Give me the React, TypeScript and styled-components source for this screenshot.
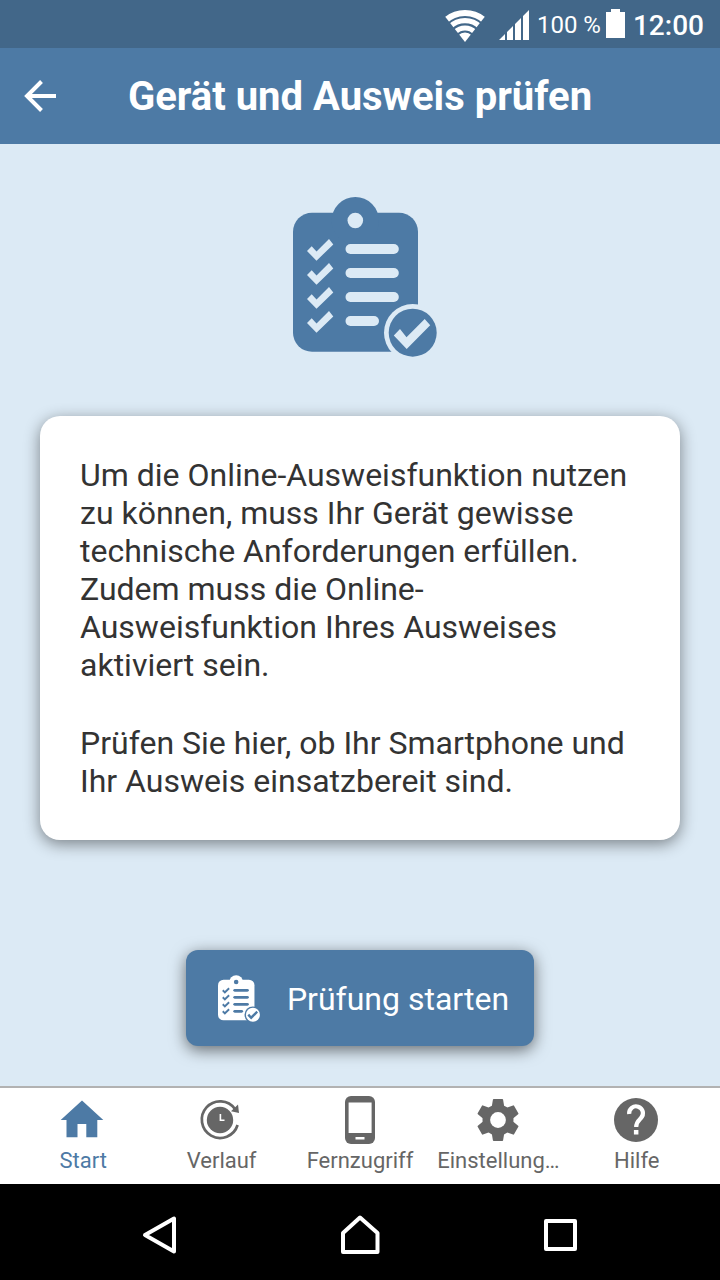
import React from "react";
import styled, { createGlobalStyle } from "styled-components";

const colors = {
  blue: "#4d7aa5",
  statusBlue: "#426789",
  pale: "#dceaf5",
  grey: "#666666",
  text: "#333333",
  white: "#ffffff",
};

const GlobalStyle = createGlobalStyle`
  * { box-sizing: border-box; }
  body {
    margin: 0;
    font-family: Roboto, "Liberation Sans", sans-serif;
    color: ${colors.text};
  }
`;

const Screen = styled.div`
  display: flex;
  flex-direction: column;
  min-height: 100vh;
  background: ${colors.pale};
`;

const StatusBar = styled.div`
  display: flex;
  align-items: center;
  justify-content: flex-end;
  height: 48px;
  padding: 2px 16px 0;
  background: ${colors.statusBlue};
  color: ${colors.white};
  svg { display: block; }
`;

const WifiSlot = styled.span`
  margin-right: 14px;
`;

const Battery = styled.span`
  display: flex;
  align-items: center;
  gap: 5px;
  margin: 0 8px;
  font-size: 24px;
  line-height: 28px;
`;

const Clock = styled.time`
  padding-top: 2px;
  font-size: 28px;
  font-weight: 500;
  line-height: 32px;
`;

const TitleBar = styled.header`
  display: grid;
  grid-template-columns: 80px 1fr 80px;
  align-items: center;
  height: 96px;
  background: ${colors.blue};
  color: ${colors.white};
`;

const IconButton = styled.button`
  display: flex;
  align-items: center;
  justify-content: center;
  height: 96px;
  padding: 0;
  border: 0;
  background: none;
  color: inherit;
  cursor: pointer;
`;

const Title = styled.h1`
  margin: 0;
  padding-top: 2px;
  font-size: 40px;
  font-weight: 700;
  line-height: 48px;
  text-align: center;
`;

const Main = styled.main`
  flex: 1;
  display: flex;
  flex-direction: column;
  align-items: center;
  padding: 53px 40px 40px;
`;

const Hero = styled.div`
  padding-left: 10px;
  margin-bottom: 59px;
  svg { display: block; }
`;

const Card = styled.section`
  width: 100%;
  display: flex;
  flex-direction: column;
  gap: 40px;
  margin-bottom: 40px;
  padding: 40px;
  border-radius: 20px;
  background: ${colors.white};
  box-shadow: 0 4px 16px rgba(0, 0, 0, 0.45);
`;

const Paragraph = styled.p`
  margin: 0;
  font-size: 32px;
  line-height: 38px;
`;

const StartButton = styled.button`
  display: flex;
  align-items: center;
  gap: 27px;
  height: 96px;
  margin-top: auto;
  padding: 0 25px 0 32px;
  border: 0;
  border-radius: 12px;
  background: ${colors.blue};
  box-shadow: 0 4px 16px rgba(0, 0, 0, 0.55);
  color: ${colors.white};
  font: 400 32px/38px Roboto, "Liberation Sans", sans-serif;
  cursor: pointer;
`;

const StartLabel = styled.span`
  padding-top: 2px;
`;

const TabBar = styled.nav`
  display: grid;
  grid-template-columns: repeat(5, minmax(0, 1fr));
  height: 98px;
  padding: 0 14px;
  border-top: 2px solid #b2b2b2;
  background: ${colors.white};
`;

const Tab = styled.a<{ $active?: boolean }>`
  display: flex;
  flex-direction: column;
  align-items: center;
  padding-top: 8px;
  color: ${(p) => (p.$active ? colors.blue : colors.grey)};
  font-size: 22px;
  line-height: 26px;
  white-space: nowrap;
  text-decoration: none;
  svg { display: block; margin-bottom: 4px; }
`;

const SystemBar = styled.nav`
  display: grid;
  grid-template-columns: repeat(3, 1fr);
  height: 96px;
  padding: 0 60px;
  background: #000000;
  color: ${colors.white};
`;

const SystemButton = styled(IconButton)`
  padding-top: 6px;
`;

const TICK = "M14 54 L23.5 63.7 L40.3 47.5 L36 42 L23.5 54.5 L18.7 49.3 Z";

function ChecklistIcon({ width, height, ink, paper }: { width: number; height: number; ink: string; paper: string }) {
  return (
    <svg width={width} height={height} viewBox="0 0 144 160" aria-hidden="true">
      <g fill={ink}>
        <rect x="0" y="15.7" width="125" height="139" rx="19" />
        <circle cx="62.3" cy="23.7" r="23.7" />
      </g>
      <g fill={paper}>
        <circle cx="62.3" cy="23.5" r="7.8" />
        {[0, 24, 48, 72].map((y) => (
          <g key={y} transform={`translate(0 ${y})`}>
            <path d={TICK} />
            <rect x="52.5" y="47" width={y === 72 ? 33.5 : 53.3} height="10" rx="5" />
          </g>
        ))}
        <circle cx="119.7" cy="135.7" r="28.7" />
      </g>
      <circle cx="119.7" cy="135.7" r="24" fill={ink} />
      <path fill={paper} d="M100.8 138.5 L113.7 152 L137.2 128.3 L131.7 122 L113.5 140.2 L107 132 Z" />
    </svg>
  );
}

const WifiIcon = () => (
  <svg width="40" height="34" viewBox="0 0 40 34" aria-hidden="true">
    <clipPath id="wifi-fan">
      <path d="M20 34 L-5 2 H45 Z" />
    </clipPath>
    <g clipPath="url(#wifi-fan)" fill="none" stroke="#fff">
      <circle cx="20" cy="34" r="29" strokeWidth="6" />
      <circle cx="20" cy="34" r="21.4" strokeWidth="5.4" />
      <circle cx="20" cy="34" r="14" strokeWidth="5" />
      <circle cx="20" cy="34" r="4.7" strokeWidth="9.4" />
    </g>
  </svg>
);

const SignalIcon = () => (
  <svg width="30" height="30" viewBox="0 0 30 30" fill="#fff" aria-hidden="true">
    <path d="M0 30 L6 24 V30 Z M8 22 L14 16 V30 H8 Z M16 14 L22 8 V30 H16 Z M24 6 L30 0 V30 H24 Z" />
  </svg>
);

const BatteryIcon = () => (
  <svg width="19" height="32" viewBox="0 0 19 32" fill="#fff" aria-hidden="true">
    <path d="M5 0 H14 V3 H19 V29 H0 V3 H5 Z" />
  </svg>
);

const BackIcon = () => (
  <svg width="32" height="32" viewBox="0 0 32 32" fill="none" stroke="currentColor" strokeWidth="4" aria-hidden="true">
    <path d="M32 16 H3 M17.5 1.5 L3 16 L17.5 30.5" />
  </svg>
);

const HomeIcon = () => (
  <svg width="48" height="48" viewBox="1 0 48 48" fill="currentColor" aria-hidden="true">
    <path d="M24 4.5 L45.3 24 H39.3 V41.3 H28.3 V28 H19.5 V41.3 H8.5 V24 H2.7 Z" />
  </svg>
);

const HistoryIcon = () => (
  <svg width="48" height="48" viewBox="2 0 48 48" aria-hidden="true">
    <path d="M39 13 A18.3 18.3 0 1 0 41.6 29" fill="none" stroke="currentColor" strokeWidth="2.7" />
    <path d="M42 8.5 L43 17 L35 15.2 Z" fill="currentColor" />
    <circle cx="24" cy="24" r="13.2" fill="currentColor" />
    <path d="M24.4 18 V24.2 H28.5" fill="none" stroke="#fff" strokeWidth="1.6" />
  </svg>
);

const PhoneIcon = () => (
  <svg width="48" height="48" viewBox="0 0 48 48" aria-hidden="true">
    <rect x="9" y="0" width="30" height="48" rx="6" fill="currentColor" />
    <rect x="12.6" y="6.5" width="23" height="30.5" fill="#fff" />
    <rect x="19.5" y="41" width="9" height="2.5" fill="#fff" />
  </svg>
);

const GearIcon = () => (
  <svg width="48" height="48" viewBox="0 0 48 48" aria-hidden="true">
    <g fill="currentColor">
      <circle cx="24" cy="24" r="15.5" />
      {[0, 60, 120, 180, 240, 300].map((a) => (
        <path key={a} transform={`rotate(${a} 24 24)`} d="M19.7 3 H28.3 Q29 3 29.1 3.7 L30.3 11 H17.7 L18.9 3.7 Q19 3 19.7 3 Z" />
      ))}
    </g>
    <circle cx="24" cy="24" r="7.9" fill="#fff" />
  </svg>
);

const HelpIcon = () => (
  <svg width="48" height="48" viewBox="1 0 48 48" aria-hidden="true">
    <circle cx="24" cy="24" r="22" fill="currentColor" />
    <path d="M17.2 18 A6.9 6.9 0 1 1 29 22 C26.5 24.5 24.2 26 24.2 31" fill="none" stroke="#fff" strokeWidth="4.2" />
    <rect x="21.9" y="34" width="4.5" height="4.5" fill="#fff" />
  </svg>
);

const tabs = [
  { label: "Start", href: "#start", Icon: HomeIcon },
  { label: "Verlauf", href: "#verlauf", Icon: HistoryIcon },
  { label: "Fernzugriff", href: "#fernzugriff", Icon: PhoneIcon },
  { label: "Einstellung…", href: "#einstellungen", Icon: GearIcon },
  { label: "Hilfe", href: "#hilfe", Icon: HelpIcon },
];

const systemButtons = [
  { label: "Zurück", d: "M5 20 L34 3.5 V36.5 Z" },
  { label: "Startbildschirm", d: "M20 2.5 L37.5 18 V37 H3 V18 Z" },
  { label: "Übersicht", d: "M6 6 H35 V34 H6 Z" },
];

export default function App() {
  return (
    <Screen>
      <GlobalStyle />
      <StatusBar>
        <WifiSlot>
          <WifiIcon />
        </WifiSlot>
        <SignalIcon />
        <Battery>
          100 %
          <BatteryIcon />
        </Battery>
        <Clock>12:00</Clock>
      </StatusBar>
      <TitleBar>
        <IconButton type="button" aria-label="Zurück">
          <BackIcon />
        </IconButton>
        <Title>Gerät und Ausweis prüfen</Title>
      </TitleBar>
      <Main>
        <Hero>
          <ChecklistIcon width={144} height={160} ink={colors.blue} paper={colors.pale} />
        </Hero>
        <Card>
          <Paragraph>
            Um die Online-Ausweisfunktion nutzen zu können, muss Ihr Gerät gewisse technische
            Anforderungen erfüllen. Zudem muss die Online-Ausweisfunktion Ihres Ausweises aktiviert
            sein.
          </Paragraph>
          <Paragraph>
            Prüfen Sie hier, ob Ihr Smartphone und Ihr Ausweis einsatzbereit sind.
          </Paragraph>
        </Card>
        <StartButton type="button">
          <ChecklistIcon width={42} height={47} ink={colors.white} paper={colors.blue} />
          <StartLabel>Prüfung starten</StartLabel>
        </StartButton>
      </Main>
      <TabBar aria-label="Navigation">
        {tabs.map(({ label, href, Icon }, i) => (
          <Tab key={label} href={href} $active={i === 0}>
            <Icon />
            {label}
          </Tab>
        ))}
      </TabBar>
      <SystemBar aria-label="System">
        {systemButtons.map(({ label, d }) => (
          <SystemButton key={label} type="button" aria-label={label}>
            <svg width="40" height="40" viewBox="0 0 40 40" fill="none" stroke="currentColor" strokeWidth="4" strokeLinejoin="round" aria-hidden="true">
              <path d={d} />
            </svg>
          </SystemButton>
        ))}
      </SystemBar>
    </Screen>
  );
}
